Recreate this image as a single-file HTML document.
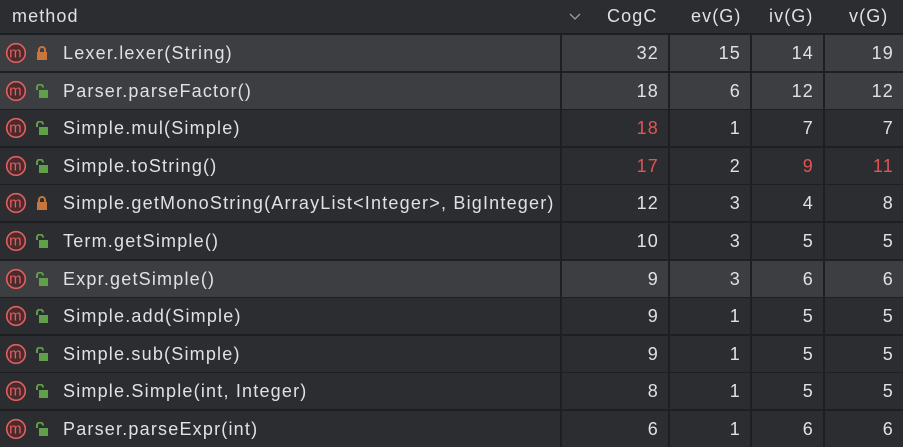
<!DOCTYPE html>
<html><head><style>
body{margin:0;background:#1e1f22;width:903px;height:444px;overflow:hidden;font-family:"Liberation Sans",sans-serif;color:#dfe1e5}
.hdr{position:absolute;left:0;top:0;width:903px;height:33px;background:#2b2d30;font-size:18px;letter-spacing:1.1px}
.hdr span{position:absolute;top:6px}
.row{position:absolute;left:0;width:903px;height:36px;font-size:18px;letter-spacing:1.2px}
.c{position:absolute;top:0;height:36px;line-height:36px;background:#2b2d30}
.hl .c{background:#3c3e42}
.n{text-align:right;box-sizing:border-box;padding-right:9px}
.r{color:#e05555}
</style></head><body>
<div class="hdr"><span style="left:12px">method</span><svg width="14" height="10" style="position:absolute;left:568px;top:12px"><path d="M2 2l5 5 5-5" stroke="#9a9da3" stroke-width="1.3" fill="none"/></svg><span style="left:607px">CogC</span><span style="left:691px">ev(G)</span><span style="left:769px">iv(G)</span><span style="left:849px">v(G)</span></div>
<div id="rows"></div>
<script>
const d=[["Lexer.lexer(String)",1,"32","15","14","19",1],["Parser.parseFactor()",0,"18","6","12","12",1],["Simple.mul(Simple)",0,"r18","1","7","7",0],["Simple.toString()",0,"r17","2","r9","r11",0],["Simple.getMonoString(ArrayList<Integer>, BigInteger)",1,"12","3","4","8",0],["Term.getSimple()",0,"10","3","5","5",0],["Expr.getSimple()",0,"9","3","6","6",1],["Simple.add(Simple)",0,"9","1","5","5",0],["Simple.sub(Simple)",0,"9","1","5","5",0],["Simple.Simple(int, Integer)",0,"8","1","5","5",0],["Parser.parseExpr(int)",0,"6","1","6","6",0]];
const cols=[[0,560],[562,106],[670,80],[752,71],[825,78]];
let h="";
d.forEach((r,i)=>{const y=35+i*37.6;
const lock=r[1]?'<svg width="12" height="14" style="position:absolute;left:36px;top:11px"><path d="M3 6V4a3 3 0 0 1 6 0v2" stroke="#c7763d" stroke-width="2" fill="none"/><rect x="1" y="6" width="10" height="8" fill="#c7763d"/></svg>':'<svg width="14" height="14" style="position:absolute;left:35px;top:11px"><path d="M2 6V3.5a3 3 0 0 1 6 0" stroke="#5fa049" stroke-width="2" fill="none"/><rect x="4" y="6" width="9" height="8" fill="#5fa049"/></svg>';
h+=`<div class="row${r[6]?' hl':''}" style="top:${y}px">`;
h+=`<div class="c" style="left:0;width:560px"><svg width="24" height="24" style="position:absolute;left:4px;top:6px"><circle cx="12" cy="12" r="9.3" fill="#4a2a2c" stroke="#e06060" stroke-width="1.6"/><text x="12" y="16.5" text-anchor="middle" font-family="Liberation Sans" font-size="15" fill="#e06060">m</text></svg>${lock}<span style="position:absolute;left:63px">${r[0].replace(/</g,"&lt;")}</span></div>`;
for(let k=1;k<5;k++){let v=r[k+1],cl="";if(v[0]=="r"){cl=" r";v=v.slice(1)}
h+=`<div class="c n${cl}" style="left:${cols[k][0]}px;width:${cols[k][1]}px">${v}</div>`}
h+="</div>"});
document.getElementById("rows").innerHTML=h;
</script>
</body></html>
